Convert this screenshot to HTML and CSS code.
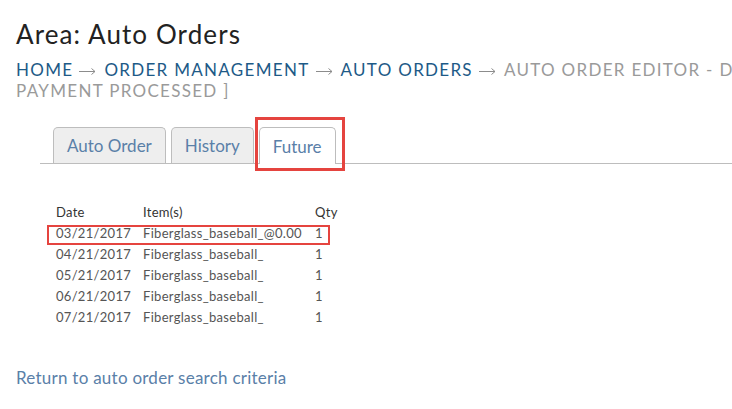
FILE: index.html
```
<!DOCTYPE html>
<html>
<head>
<meta charset="utf-8">
<link rel="stylesheet" href="styles.css">
</head>
<body>
<div class="page">
  <h1 class="title">Area: Auto Orders</h1>
  <div class="crumbs">
    <div class="crumb-line"><a class="crumb" href="#">HOME</a><svg class="arrow" viewBox="0 0 17 8" width="17" height="8"><path d="M0 4.5H16M12.5 1.5L16 4.5L12.5 7.5" fill="none" stroke="#8c8c8c" stroke-width="1"/></svg><a class="crumb" href="#">ORDER MANAGEMENT</a><svg class="arrow" viewBox="0 0 17 8" width="17" height="8"><path d="M0 4.5H16M12.5 1.5L16 4.5L12.5 7.5" fill="none" stroke="#8c8c8c" stroke-width="1"/></svg><a class="crumb" href="#">AUTO ORDERS</a><svg class="arrow" viewBox="0 0 17 8" width="17" height="8"><path d="M0 4.5H16M12.5 1.5L16 4.5L12.5 7.5" fill="none" stroke="#8c8c8c" stroke-width="1"/></svg><span class="current">AUTO ORDER EDITOR - DEMO [ LAST</span></div>
    <div class="crumb-line"><span class="current">PAYMENT PROCESSED ]</span></div>
  </div>
  <div class="tabs">
    <a class="tab" href="#">Auto Order</a>
    <a class="tab" href="#">History</a>
    <a class="tab tab-active" href="#">Future</a>
  </div>
  <div class="orders">
    <div class="row head"><span>Date</span><span>Item(s)</span><span>Qty</span></div>
    <div class="row marked"><span>03/21/2017</span><span>Fiberglass_baseball_@0.00</span><span>1</span></div>
    <div class="row"><span>04/21/2017</span><span>Fiberglass_baseball_</span><span>1</span></div>
    <div class="row"><span>05/21/2017</span><span>Fiberglass_baseball_</span><span>1</span></div>
    <div class="row"><span>06/21/2017</span><span>Fiberglass_baseball_</span><span>1</span></div>
    <div class="row"><span>07/21/2017</span><span>Fiberglass_baseball_</span><span>1</span></div>
  </div>
  <a class="back" href="#">Return to auto order search criteria</a>
</div>
</body>
</html>
```
FILE: styles.css
```
html, body {
  margin: 0;
  padding: 0;
  background: #fff;
  overflow: hidden;
}
body {
  font-family: Lato, "Open Sans", sans-serif;
  width: 732px;
  height: 409px;
}
.page {
  padding: 19px 0 0 16px;
}
.title {
  margin: 0;
  font-size: 26px;
  line-height: 31px;
  font-weight: 400;
  letter-spacing: 1.1px;
  color: #222;
}
.crumbs {
  margin-top: 9px;
  font-size: 17px;
  line-height: 21px;
  letter-spacing: 1.3px;
  white-space: nowrap;
  overflow: hidden;
  width: 716px;
}
.crumb-line {
  display: flex;
  align-items: center;
}
.crumb {
  color: #1d5a87;
  text-decoration: none;
}
.arrow {
  flex: none;
  margin: 3px 8px 0 6px;
}
.current {
  color: #9a9a9a;
}
.tabs {
  margin-top: 26px;
  margin-left: 24px;
  padding-left: 13px;
  display: flex;
  align-items: flex-end;
  gap: 5px;
  border-bottom: 1px solid #bdbdbd;
  height: 36px;
}
.tab {
  display: block;
  height: 36px;
  box-sizing: border-box;
  padding: 0 13px;
  line-height: 35px;
  font-size: 17px;
  color: #5a80a8;
  text-decoration: none;
  background: #eee;
  border: 1px solid #bdbdbd;
  border-bottom: none;
  border-radius: 5px 5px 0 0;
}
.tab-active {
  position: relative;
  background: #fff;
  height: 37px;
  margin-bottom: -1px;
  line-height: 38px;
}
.tab-active::after {
  content: "";
  position: absolute;
  top: -11px;
  left: -5px;
  right: -10px;
  bottom: -7px;
  border: 3px solid #e5443f;
}
.orders {
  margin: 38px 0 0 40px;
  font-size: 13px;
  line-height: 21px;
  letter-spacing: 0.3px;
  color: #555;
}
.row {
  display: grid;
  grid-template-columns: 87px 172px auto;
  width: 280px;
}
.head {
  color: #333;
}
.marked {
  position: relative;
}
.marked::after {
  content: "";
  position: absolute;
  top: 2px;
  left: -9px;
  right: 6px;
  bottom: -1px;
  border: 2px solid #e5443f;
}
.back {
  display: inline-block;
  margin-top: 39px;
  font-size: 17px;
  line-height: 21px;
  letter-spacing: 0.25px;
  color: #5a80a8;
  text-decoration: none;
}
```
